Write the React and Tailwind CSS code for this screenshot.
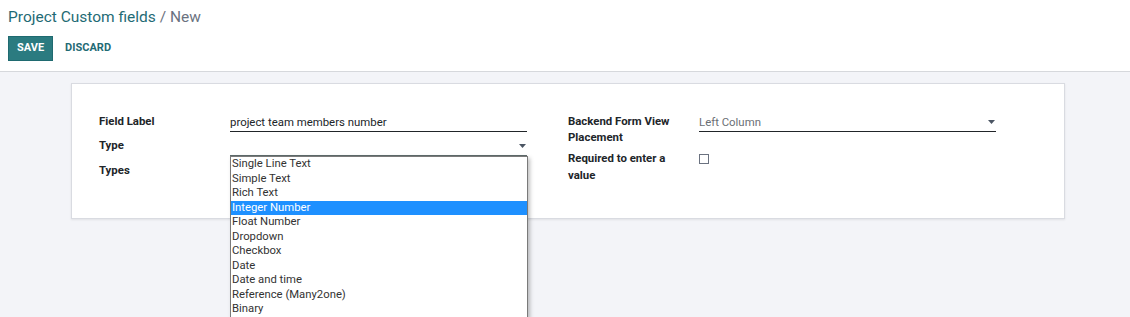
import React from 'react';

const typeOptions = [
  'Single Line Text',
  'Simple Text',
  'Rich Text',
  'Integer Number',
  'Float Number',
  'Dropdown',
  'Checkbox',
  'Date',
  'Date and time',
  'Reference (Many2one)',
  'Binary',
];

const Caret = () => (
  <svg width="7" height="4" viewBox="0 0 7 4" className="shrink-0">
    <path d="M0 0h7L3.5 4z" fill="#4b5563" />
  </svg>
);

const TypeDropdown = ({ selected }) => (
  <div className="absolute left-0 top-full z-10 w-[298px] border border-[#7a7a7a] bg-white shadow-[2px_2px_4px_rgba(0,0,0,0.25)]">
    {typeOptions.map((opt) => (
      <div
        key={opt}
        className={`pl-[1px] text-[11.3px] leading-[14.5px] whitespace-nowrap ${
          opt === selected ? 'bg-[#1e90ff] text-white' : 'text-[#333]'
        }`}
      >
        {opt}
      </div>
    ))}
  </div>
);

export default function App() {
  return (
    <div className="h-screen overflow-hidden bg-[#f3f4f8] font-['Roboto',sans-serif]">
      <div className="h-[72px] border-b border-[#d6d8dc] bg-white pl-2 pt-[7px]">
        <h1 className="text-[15.5px] leading-[20px]">
          <span className="text-[#1f6b75]">Project Custom fields</span>
          <span className="text-[#6b7280]"> / New</span>
        </h1>
        <div className="mt-[9px] flex items-center gap-3">
          <button className="h-[25px] border border-[#1f6a70] bg-[#2b7b80] px-[8px] text-[11px] font-bold text-white">
            SAVE
          </button>
          <button className="text-[11px] font-bold text-[#1f6b75]">DISCARD</button>
        </div>
      </div>

      <div className="ml-[71px] mt-[11px] w-[994px] border border-[#d9dbe1] bg-white shadow-[0_1px_2px_rgba(0,0,0,0.08)]">
        <div className="flex gap-[41px] pb-[34px] pl-[27px] pt-[28px] text-[11.4px] text-[#212529]">
          <div className="flex w-[428px] flex-col">
            <div className="flex">
              <div className="w-[131px] font-bold leading-[18px]">Field Label</div>
              <div className="w-[297px] border-b border-[#212529] pt-[1px] leading-[18px]">
                project team members number
              </div>
            </div>

            <div className="mt-[4px] flex">
              <div className="w-[131px] font-bold leading-[18px]">Type</div>
              <div className="relative w-[297px]">
                <div className="flex h-[20px] items-start justify-end border-b border-[#5f6b6b] pr-[1px] pt-[8px]">
                  <Caret />
                </div>
                <TypeDropdown selected="Integer Number" />
              </div>
            </div>

            <div className="mt-[5px] flex">
              <div className="w-[131px] font-bold leading-[18px]">Types</div>
            </div>
          </div>

          <div className="flex w-[428px] flex-col">
            <div className="flex">
              <div className="w-[131px] pt-[1px] font-bold leading-[16px]">
                Backend Form View
                <br />
                Placement
              </div>
              <div className="w-[297px]">
                <div className="flex items-center justify-between border-b border-[#212529] pr-[1px] pt-[1px] leading-[18px] text-[#6b6f75]">
                  <span>Left Column</span>
                  <Caret />
                </div>
              </div>
            </div>

            <div className="mt-[5px] flex">
              <div className="w-[131px] font-bold leading-[17px]">
                Required to enter a
                <br />
                value
              </div>
              <div className="pt-[4px]">
                <div className="h-[10px] w-[10px] border border-[#6b7280] bg-white" />
              </div>
            </div>
          </div>
        </div>
      </div>
    </div>
  );
}
